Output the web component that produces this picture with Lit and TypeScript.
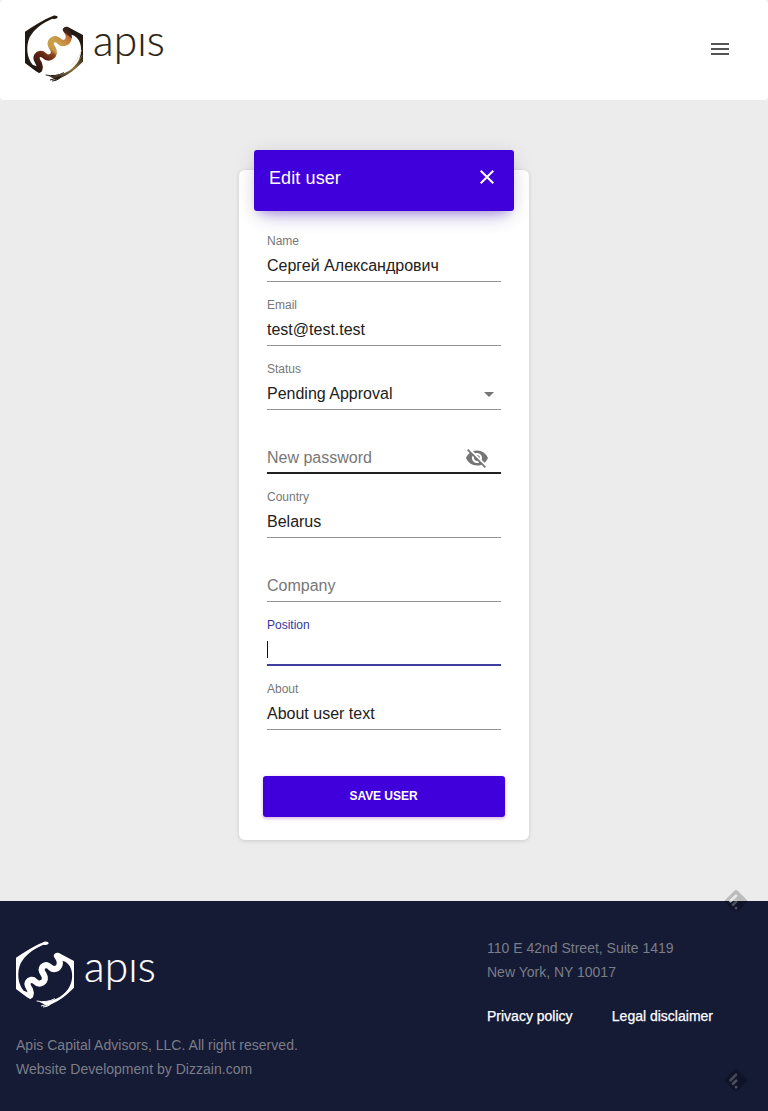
import { LitElement, html, css, svg, nothing } from "lit";
import { customElement, property } from "lit/decorators.js";

@customElement("apis-logo")
class ApisLogo extends LitElement {
  @property({ type: Boolean, reflect: true }) light = false;

  static styles = css`
    :host { display: flex; align-items: flex-start; color: #2a2313; }
    :host([light]) { color: #fff; }
    .mark { display: block; width: 70px; height: 76px; flex: none; }
    .word {
      font: 300 42.5px/50px Lato, "Open Sans", sans-serif;
      margin: 5px 0 0 3px;
      letter-spacing: 0.1px;
      -webkit-text-stroke: 0.2px currentColor;
    }
  `;

  render() {
    const ink = this.light ? "#fff" : "#221a12";
    const snake = this.light ? "#fff" : "url(#g)";
    return html`
      <svg class="mark" viewBox="0 0 210 228" aria-hidden="true">
        <defs>
          <linearGradient id="g" gradientUnits="userSpaceOnUse" x1="145" y1="62" x2="55" y2="180">
            <stop offset="0" stop-color="#38201a" />
            <stop offset="0.07" stop-color="#4b261a" />
            <stop offset="0.09" stop-color="#bd6c36" />
            <stop offset="0.2" stop-color="#c88640" />
            <stop offset="0.32" stop-color="#c9a04a" />
            <stop offset="0.5" stop-color="#c89a46" />
            <stop offset="0.57" stop-color="#8b451f" />
            <stop offset="0.72" stop-color="#602511" />
            <stop offset="1" stop-color="#2a1510" />
          </linearGradient>
          <linearGradient id="r" x1="0" y1="0" x2="0" y2="1">
            <stop offset="0.55" stop-color="#221a12" />
            <stop offset="0.8" stop-color="#8e7440" />
            <stop offset="1" stop-color="#221a12" />
          </linearGradient>
        </defs>
        <path fill=${ink} d="M15 65 C42 47 70 29 100 17 C108 16 113 19 113 22 C111 27 104 28 97 26 C68 39 42 57 29 82 C17 108 20 145 38 164 L54 170 L66 182 L58 189 L48 184 L15 159Z" />
        <path fill=${this.light ? ink : "url(#r)"} d="M128 58 Q137 46 148 53 L189 75 L189 155 L169 174 C151 190 130 202 107 210 C102 206 94 202 86 198 C124 199 153 184 171 160 C183 141 187 120 180 99 C176 86 167 77 154 74Z" />
        <path fill="none" stroke=${ink} stroke-width="3" d="M77 195 Q107 201 132 188 M90 210 Q108 206 123 200 M96 213 Q108 213 119 205" />
        <path fill="none" stroke=${snake} stroke-width="18.5" stroke-linecap="round" stroke-linejoin="round"
          d="M138 60 C143 67 148 76 146 85 C143 99 128 103 119 95 C109 85 101 86 95 92 C88 100 93 108 98 115 C105 126 102 135 94 140 C86 145 78 142 72 136 C65 129 55 131 51 138 C46 147 53 154 57 161 C60 168 60 173 58 178" />
        ${this.light ? nothing : svg`<path fill="none" stroke="#d8c590" stroke-width="1.5" d="M153 166 Q177 147 185 120 M157 171 Q178 155 187 136" />`}
      </svg>
      <span class="word" aria-label="apis">apıs</span>
    `;
  }
}

@customElement("form-field")
class FormField extends LitElement {
  @property() label = "";
  @property() value = "";
  @property() kind = "";

  static styles = css`
    :host {
      display: flex; flex-direction: column; gap: 7px; box-sizing: border-box;
      height: 64px; padding-top: 15px; border-bottom: 1px solid #949494;
      font-family: "Liberation Sans", Arial, sans-serif;
    }
    :host([kind="password"]) { border-bottom: 2px solid #212121; }
    :host([kind="focused"]) { border-bottom: 2px solid #3f3fa0; }
    .label { font-size: 12px; line-height: 16px; height: 16px; color: #777; }
    :host([kind="focused"]) .label { color: #3535a0; }
    .row { display: flex; align-items: center; justify-content: space-between; height: 20px; font-size: 16px; line-height: 20px; color: #212121; }
    .placeholder { color: #777; }
    .icon { display: block; flex: none; fill: #757575; }
    .arrow { width: 10px; height: 5px; margin: 1px 7px 0 0; }
    .eye { width: 24px; height: 24px; margin: 0 12px 0 0; }
    .caret { width: 1px; height: 17px; background: #111; margin-bottom: 2px; }
  `;

  render() {
    const filled = this.value !== "" || this.kind === "focused";
    return html`
      <div class="label">${filled ? this.label : nothing}</div>
      <div class="row">
        ${this.kind === "focused"
          ? html`<span class="caret"></span>`
          : html`<span class=${filled ? "value" : "placeholder"}>${filled ? this.value : this.label}</span>`}
        ${this.kind === "select" ? html`<svg class="icon arrow" viewBox="0 0 10 5"><path d="M0 0h10L5 5z" /></svg>` : nothing}
        ${this.kind === "password"
          ? html`<svg class="icon eye" viewBox="0 0 24 24"><path d="M12 7c2.76 0 5 2.24 5 5 0 .65-.13 1.26-.36 1.83l2.92 2.92c1.51-1.26 2.7-2.89 3.43-4.75-1.73-4.39-6-7.5-11-7.5-1.4 0-2.74.25-3.98.7l2.16 2.16C10.74 7.13 11.35 7 12 7zM2 4.27l2.28 2.28.46.46C3.08 8.3 1.78 10.02 1 12c1.73 4.39 6 7.5 11 7.5 1.55 0 3.03-.3 4.38-.84l.42.42L19.73 22 21 20.73 3.27 3 2 4.27zM7.53 9.8l1.55 1.55c-.05.21-.08.43-.08.65 0 1.66 1.34 3 3 3 .22 0 .44-.03.65-.08l1.55 1.55c-.67.33-1.41.53-2.2.53-2.76 0-5-2.24-5-5 0-.79.2-1.53.53-2.2zm4.31-.78l3.15 3.15.02-.16c0-1.66-1.34-3-3-3l-.17.01z" /></svg>`
          : nothing}
      </div>
    `;
  }
}

const FIELDS = [
  { label: "Name", value: "Сергей Александрович", kind: "" },
  { label: "Email", value: "test@test.test", kind: "" },
  { label: "Status", value: "Pending Approval", kind: "select" },
  { label: "New password", value: "", kind: "password" },
  { label: "Country", value: "Belarus", kind: "" },
  { label: "Company", value: "", kind: "" },
  { label: "Position", value: "", kind: "focused" },
  { label: "About", value: "About user text", kind: "" },
];

@customElement("app-root")
class AppRoot extends LitElement {
  static styles = css`
    :host {
      display: flex; flex-direction: column; position: relative; height: 1111px;
      background: #ececec; font-family: "Liberation Sans", Arial, sans-serif; overflow: hidden;
    }
    .top {
      display: flex; justify-content: space-between; align-items: flex-start; box-sizing: border-box;
      height: 100px; padding: 10px 36px 0 20px; background: #fff; border-radius: 4px;
    }
    .menu { width: 24px; height: 24px; margin-top: 27px; fill: #555; }
    .main { flex: 1; display: flex; justify-content: center; align-items: flex-start; padding-top: 70px; }
    .card {
      display: flex; flex-direction: column; box-sizing: border-box; width: 290px; height: 670px;
      padding: 0 15px; background: #fff; border-radius: 6px; box-shadow: 0 1px 4px rgba(0, 0, 0, 0.14);
    }
    .head {
      display: flex; justify-content: space-between; align-items: flex-start; box-sizing: border-box;
      height: 61px; margin-top: -20px; padding: 15px 15px 0; background: #3f00dc; color: #fff; border-radius: 3px;
      box-shadow: 0 12px 20px -10px rgba(63, 0, 220, 0.28), 0 4px 20px rgba(0, 0, 0, 0.12), 0 7px 8px -5px rgba(63, 0, 220, 0.2);
    }
    .title { font-size: 18px; line-height: 26px; letter-spacing: 0.1px; }
    .close { width: 24px; height: 24px; fill: #fff; }
    .form { display: flex; flex-direction: column; padding: 7px 13px 0; }
    .save {
      display: block; height: 41px; margin: 46px 9px 0; padding: 0 1px 2px 0; border: 0; border-radius: 3px;
      background: #3f00dc; color: #fff; font: 700 12px "Liberation Sans", Arial, sans-serif; letter-spacing: -0.05px;
      box-shadow: 0 2px 2px rgba(156, 39, 176, 0.14), 0 1px 4px rgba(156, 39, 176, 0.25);
    }
    .foot {
      display: flex; justify-content: space-between; box-sizing: border-box; height: 210px;
      padding: 35px 54px 0 16px; background: #151a35; color: #7b7e88; font-size: 14px; line-height: 24px;
    }
    .brand { display: flex; flex-direction: column; gap: 21px; letter-spacing: 0.02px; }
    .flogo { margin-left: -5px; }
    .contact { display: flex; flex-direction: column; gap: 20px; width: 227px; }
    .links { display: flex; justify-content: space-between; padding-right: 1px; color: #fff; -webkit-text-stroke: 0.25px #fff; }
    .badge { position: absolute; left: 724px; width: 24px; height: 24px; }
    .upper { top: 889px; }
    .lower { top: 1068px; }
  `;

  badge(place: string) {
    return html`<svg class="badge ${place}" viewBox="0 0 24 24" aria-hidden="true">
      <path fill="#000" fill-opacity=".2" d="M10.3 1.7q1.7-1.4 3.4 0l9 9q1.5 1.5 0 3l-7.6 7.6q-1 .9-2.3.9h-1.6q-1.3 0-2.3-.9L1.3 13.7q-1.5-1.5 0-3z" />
      <path fill="none" stroke="#fff" stroke-opacity=${place === "upper" ? ".65" : ".22"} stroke-width="2.7" stroke-linecap="round" d="M6.5 12.3l5.5-5.5" />
      <path fill="none" stroke="#fff" stroke-opacity=".25" stroke-width="2.7" stroke-linecap="round" d="M9 15.8l3.2-3.2M12 19.2h.1" />
    </svg>`;
  }

  render() {
    return html`
      <header class="top">
        <apis-logo></apis-logo>
        <svg class="menu" viewBox="0 0 24 24"><path d="M3 18h18v-2H3v2zm0-5h18v-2H3v2zm0-7v2h18V6H3z" /></svg>
      </header>
      <main class="main">
        <section class="card">
          <div class="head">
            <span class="title">Edit user</span>
            <svg class="close" viewBox="0 0 24 24"><path d="M19 6.41L17.59 5 12 10.59 6.41 5 5 6.41 10.59 12 5 17.59 6.41 19 12 13.41 17.59 19 19 17.59 13.41 12z" /></svg>
          </div>
          <div class="form">
            ${FIELDS.map((f) => html`<form-field label=${f.label} value=${f.value} kind=${f.kind}></form-field>`)}
          </div>
          <button class="save">SAVE USER</button>
        </section>
      </main>
      <footer class="foot">
        <div class="brand">
          <apis-logo class="flogo" light></apis-logo>
          <div>Apis Capital Advisors, LLC. All right reserved.<br />Website Development by Dizzain.com</div>
        </div>
        <div class="contact">
          <div>110 E 42nd Street, Suite 1419<br />New York, NY 10017</div>
          <div class="links"><span>Privacy policy</span><span>Legal disclaimer</span></div>
        </div>
      </footer>
      ${this.badge("upper")} ${this.badge("lower")}
    `;
  }
}
